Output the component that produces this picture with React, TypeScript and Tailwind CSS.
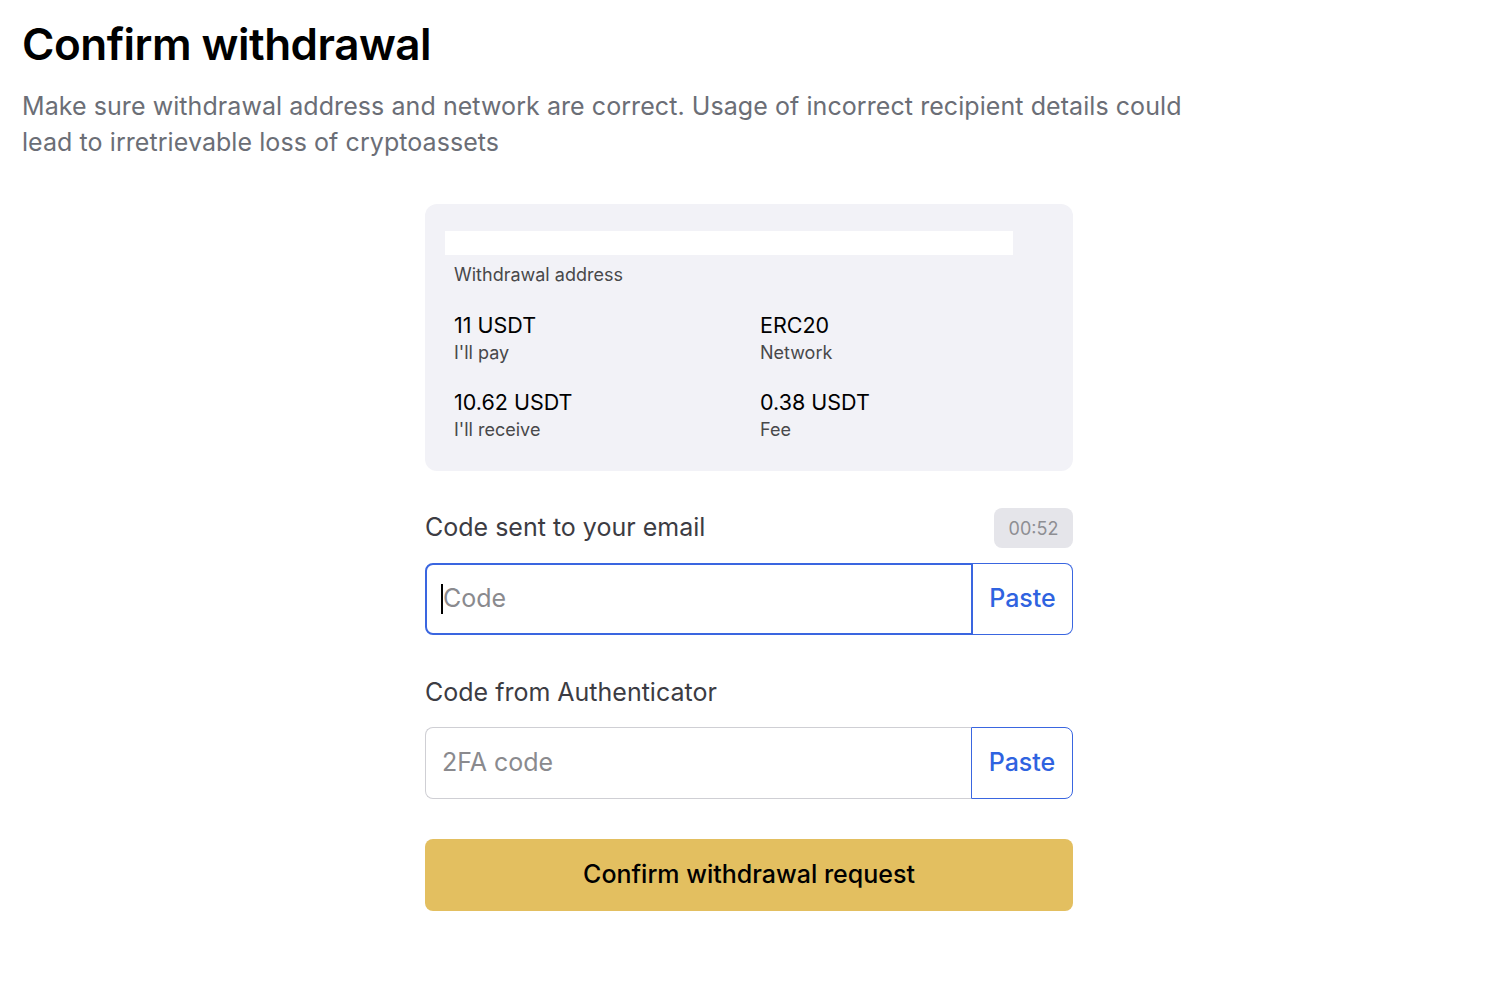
import React from "react";

export default function App() {
  return (
    <div
      className="min-h-screen bg-white pl-[22px] pr-[12px] pt-[18px] text-black"
      style={{ fontFamily: "Inter, 'Noto Sans', sans-serif" }}
    >
      <h1 className="text-[44px] leading-[52px] font-semibold tracking-[-0.5px]">Confirm withdrawal</h1>
      <p className="mt-[18px] max-w-[1175px] text-[25px] leading-[36px] tracking-[0.07px] text-[#6b6e76]">
        Make sure withdrawal address and network are correct. Usage of incorrect recipient details could
        lead to irretrievable loss of cryptoassets
      </p>

      <div className="mx-auto mt-[44px] w-[648px]">
        <div className="rounded-[12px] bg-[#f2f2f7] px-[29px] pt-[27px] pb-[26px]">
          <div className="-ml-[9px] h-[24px] w-[568px] bg-white" />
          <div className="mt-[8px] text-[18px] leading-[24px] text-[#48484a]">Withdrawal address</div>
          <div className="mt-[25px] grid grid-cols-[306px_1fr] gap-y-[21px]">
            <div>
              <div className="text-[21.5px] leading-[26px] text-black">11 USDT</div>
              <div className="text-[18px] leading-[30px] text-[#48484a]">I'll pay</div>
            </div>
            <div>
              <div className="text-[21.5px] leading-[26px] text-black">ERC20</div>
              <div className="text-[18px] leading-[30px] text-[#48484a]">Network</div>
            </div>
            <div>
              <div className="text-[21.5px] leading-[26px] text-black">10.62 USDT</div>
              <div className="text-[18px] leading-[30px] text-[#48484a]">I'll receive</div>
            </div>
            <div>
              <div className="text-[21.5px] leading-[26px] text-black">0.38 USDT</div>
              <div className="text-[18px] leading-[30px] text-[#48484a]">Fee</div>
            </div>
          </div>
        </div>

        <div className="mt-[37px] flex h-10 items-center justify-between">
          <span className="-mt-[2px] text-[25px] leading-[36px] text-[#3c3c43]">Code sent to your email</span>
          <span className="flex h-10 w-[79px] items-center justify-center rounded-[8px] bg-[#e5e5ea] text-[18px] text-[#8e8e93]">
            00:52
          </span>
        </div>
        <div className="mt-[15px] flex h-[72px]">
          <div className="flex flex-1 items-center rounded-l-[8px] border-2 border-[#3a66e0] pl-[14px]">
            <span className="h-[30px] w-[2px] bg-black" />
            <span className="text-[25px] text-[#8a8a8e]">Code</span>
          </div>
          <button className="flex w-[100px] items-center justify-center rounded-r-[8px] border border-l-0 border-[#3a66e0] text-[25px] font-medium text-[#2f63e0]">
            Paste
          </button>
        </div>

        <div className="mt-[38px] flex h-10 items-center">
          <span className="-mt-[2px] text-[25px] leading-[36px] text-[#3c3c43]">Code from Authenticator</span>
        </div>
        <div className="mt-[14px] flex h-[72px]">
          <div className="flex flex-1 items-center rounded-l-[8px] border border-r-0 border-[#cfcfd4] pl-[16px]">
            <span className="text-[25px] text-[#8a8a8e]">2FA code</span>
          </div>
          <button className="flex w-[102px] items-center justify-center rounded-r-[8px] border border-[#3a66e0] text-[25px] font-medium text-[#2f63e0]">
            Paste
          </button>
        </div>

        <button className="mt-[40px] flex h-[72px] w-full items-center justify-center rounded-[8px] bg-[#e3bf60] text-[25px] font-medium text-black">
          Confirm withdrawal request
        </button>
      </div>
    </div>
  );
}
